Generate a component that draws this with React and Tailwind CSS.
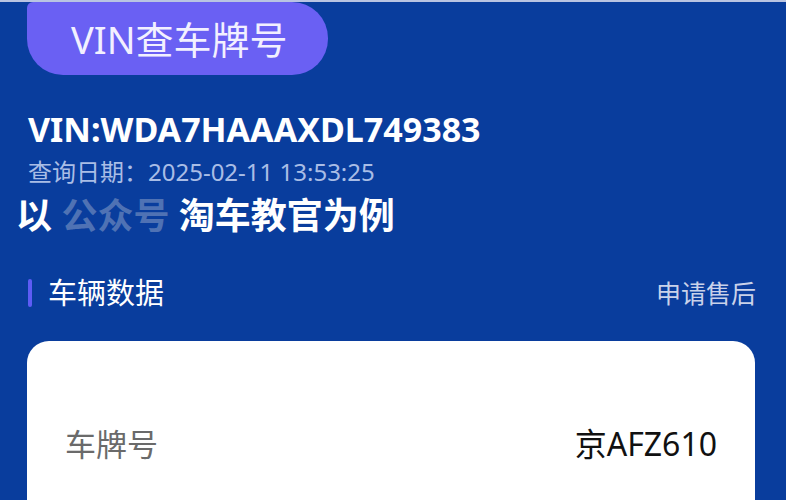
import React from "react";

const font = { fontFamily: '"Noto Sans", "Noto Sans CJK SC", sans-serif' };

export default function App() {
  return (
    <div
      className="w-[786px] h-[500px] overflow-hidden bg-[#093d9d] border-t-2 border-[#b9c4e2]"
      style={font}
    >
      <div className="pl-[27px]">
        <div className="w-[301px] h-[73px] bg-[#6a60f3] rounded-tl-[6px] rounded-tr-[36px] rounded-b-[36px] flex items-center pl-[44px]">
          <span className="text-[38px] leading-none text-[#f2f0ff]">
            VIN查车牌号
          </span>
        </div>
      </div>

      <div className="pl-[28px] mt-[34px]">
        <div className="text-[34px] leading-[40px] font-bold text-white">
          VIN:WDA7HAAAXDL749383
        </div>
        <div className="text-[24px] leading-[30px] text-[#a9bde6] mt-[8px]">
          查询日期：2025-02-11 13:53:25
        </div>
      </div>

      <div className="pl-[16px] mt-[7px] text-[36px] leading-[44px] font-bold text-white">
        以 <span className="text-[#4f72b4]">公众号</span> 淘车教官为例
      </div>

      <div className="mx-[28px] mt-[37px] flex items-center justify-between">
        <div className="flex items-center gap-[16px]">
          <div className="w-[4px] h-[28px] bg-[#5e5cf5] rounded-sm" />
          <span className="text-[29px] leading-[36px] text-white">车辆数据</span>
        </div>
        <span className="text-[25px] leading-[32px] text-[#c9d2ea] mr-[2px]">申请售后</span>
      </div>

      <div className="mx-[27px] mt-[30px] w-[728px] h-[200px] bg-white rounded-[22px] px-[38px] pt-[83px]">
        <div className="flex items-center justify-between">
          <span className="text-[31px] leading-[40px] text-[#6a6a6a]">车牌号</span>
          <span className="text-[32px] leading-[40px] text-[#111]">京AFZ610</span>
        </div>
      </div>
    </div>
  );
}
